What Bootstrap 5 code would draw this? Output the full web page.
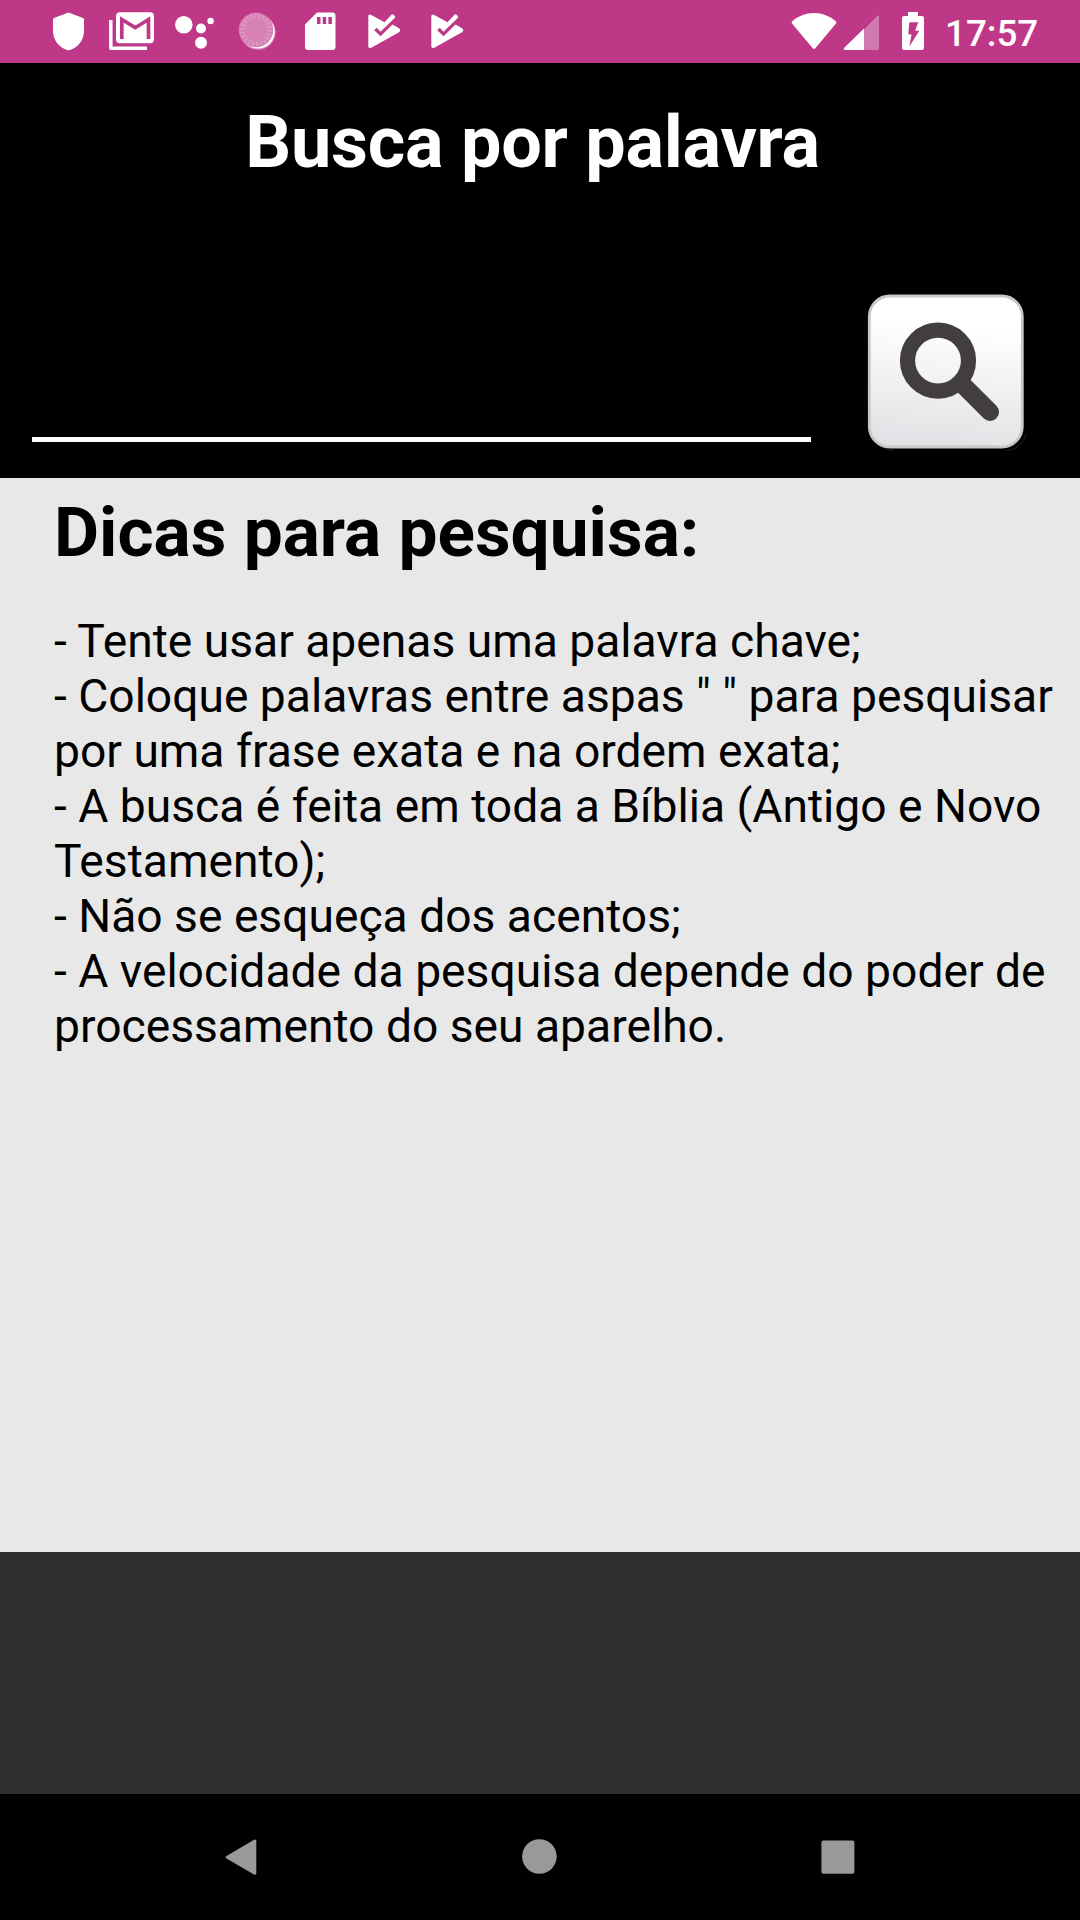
<!DOCTYPE html>
<html lang="pt-BR">
<head>
<meta charset="utf-8">
<meta name="viewport" content="width=device-width, initial-scale=1">
<title>Busca por palavra</title>
<link href="https://cdn.jsdelivr.net/npm/bootstrap@5.3.0/dist/css/bootstrap.min.css" rel="stylesheet">
<style>
body{font-family:Roboto,"Noto Sans",sans-serif;background:#303030;color:#000;height:1920px;overflow:hidden}
svg{display:block;flex:none}
.status{height:63px;background:#be3887;color:#fff;padding-left:37px}
.clock{font-size:36.75px;font-weight:500;line-height:43px;width:135px;padding-top:3px}
.search-head{height:415px;background:#000;color:#fff;padding-top:37px}
.screen-title{font-size:72px;letter-spacing:-.25px;line-height:86px;font-weight:700;padding-right:15px}
.search-row{padding-left:32px;padding-right:52px;height:292px}
.word-input,.word-input:focus{width:779px;height:94px;margin-bottom:36px;border:0;border-bottom:5px solid #fff;border-radius:0;background:transparent;color:#fff;box-shadow:none}
.search-btn{margin-bottom:24px}
.tips{height:1074px;background:#e8e8e8;padding:15px 10px 0 54px}
.tips h2{font-size:69.4px;line-height:80px;font-weight:700}
.tips p{font-size:46.2px;line-height:55px;margin-top:41px;white-space:nowrap}
.nav-keys{height:126px;background:#000}
</style>
</head>
<body class="d-flex flex-column">
<header class="status d-flex align-items-center">
  <svg width="63" height="63" viewBox="37 0 63 63"><path fill="#fff" d="M68.500 12.500 83 18q1 .4 1 1.500V31c0 9-6 17-15.500 19.500C59 48 53 40 53 31V19.500q0-1 1-1.500Z"/></svg>
  <svg width="63" height="63" viewBox="100 0 63 63"><path fill="none" stroke="#fff" stroke-width="3.500" stroke-linejoin="round" d="M110.800 20v28.300H147"/><rect x="116" y="12.300" width="38" height="31" rx="4" fill="#fff"/><path fill="none" stroke="#be3887" stroke-width="3.700" d="M121.800 39V19.500l13.400 8.200 13.300-8.200V39"/></svg>
  <svg width="63" height="63" viewBox="163 0 63 63" fill="#fff"><circle cx="183.800" cy="24.800" r="8.800"/><circle cx="201" cy="28.500" r="5"/><circle cx="210.600" cy="21" r="3.200"/><circle cx="201" cy="42.700" r="6"/></svg>
  <svg width="63" height="63" viewBox="226 0 63 63"><circle cx="258" cy="32.200" r="17.600" fill="#d98bb9"/><circle cx="257.900" cy="31.600" r="16.900" fill="#fff"/><circle cx="256" cy="29.900" r="17.300" fill="#d781b4"/><circle cx="256" cy="29.900" r="13.700" fill="none" stroke="#dd97c0" stroke-width="4.600" stroke-dasharray="1.800 2.110"/></svg>
  <svg width="63" height="63" viewBox="289 0 63 63"><path fill="#fff" fill-rule="evenodd" d="M317 12.500h15.500q3 0 3 3V47q0 3-3 3H308q-3 0-3-3V24.500ZM317 17v7h3.500v-7Zm5.700 0v7h3.500v-7Zm5.700 0v7h3.500v-7Z"/></svg>
  <svg width="63" height="63" viewBox="352 0 63 63"><path id="play-check" fill="#fff" d="M368.300 16.500q0-3 3-1.500L384.500 22.300 391 15.200q1.500-1.500 2.500-.5l1.200 1.200q1 1 0 2.200L380.500 31.700l-3.800-4-2.500 2.600 6.400 6L392.500 24.500 399 28.300q2.500 2 0 4L371.300 47.700q-3 1-3-1.500Z"/></svg>
  <svg width="63" height="63" viewBox="352 0 63 63"><use href="#play-check"/></svg>
  <div class="d-flex align-items-center ms-auto">
    <svg width="52" height="63" viewBox="788 0 52 63"><path fill="#fff" d="M792 21.500C798 16 806 13 814 13s16 3 22 8.500q.8 1 0 2L815.500 48q-1.500 1.800-3 0L792 23.500q-.8-1 0-2Z"/></svg>
    <svg width="50" height="63" viewBox="840 0 50 63"><path fill="#d27aaf" d="M864 29.500 877 16q2-2 2 1v31q0 2-2 2h-13Z"/><path fill="#fff" d="M864 28.500V50h-18.500q-3 0-1-2.500Z"/></svg>
    <svg width="55" height="63" viewBox="890 0 55 63"><path fill="#fff" d="M908 12h10v4h4q2 0 2 2v30q0 2-2 2h-18q-2 0-2-2V18q0-2 2-2h4Z"/><path fill="#be3887" d="M909.300 22.300h9l-3.200 8.400h4.200L909.300 46.500l2.300-12h-3.300Z"/></svg>
    <div class="clock">17:57</div>
  </div>
</header>
<section class="search-head">
  <h1 class="screen-title text-center mb-0">Busca por palavra</h1>
  <form class="search-row d-flex align-items-end justify-content-between" onsubmit="return false">
    <input class="word-input form-control p-0" type="text" aria-label="Palavra">
    <button class="search-btn btn p-0 border-0" type="submit" aria-label="Buscar">
      <svg width="164" height="164" viewBox="864 290 164 164">
        <defs><linearGradient id="face" x1=".1" y1="0" x2="0" y2="1"><stop offset=".15" stop-color="#fff"/><stop offset="1" stop-color="#dfe0e3"/></linearGradient></defs>
        <path fill="none" stroke="#222" stroke-width="1" d="M1007 451q16-3 19-17M894 451q-11-2-17-8"/>
        <rect x="869.300" y="296" width="153" height="151" rx="20.500" fill="url(#face)" stroke="#c9c7c8" stroke-width="2.800"/>
        <circle cx="938" cy="360.600" r="30.500" fill="none" stroke="#433e3e" stroke-width="15.200"/>
        <path stroke="#433e3e" stroke-width="18" stroke-linecap="round" d="m963 385 27 27"/>
      </svg>
    </button>
  </form>
</section>
<main class="tips">
  <h2 class="mb-0">Dicas para pesquisa:</h2>
  <p class="mb-0">- Tente usar apenas uma palavra chave;<br>- Coloque palavras entre aspas " " para pesquisar<br>por uma frase exata e na ordem exata;<br>- A busca é feita em toda a Bíblia (Antigo e Novo<br>Testamento);<br>- Não se esqueça dos acentos;<br>- A velocidade da pesquisa depende do poder de<br>processamento do seu aparelho.</p>
</main>
<footer class="nav-keys d-flex align-items-center justify-content-center mt-auto">
  <svg width="298" height="126" viewBox="93 1794 298 126"><path fill="#999" stroke="#999" stroke-width="3" stroke-linejoin="round" d="M227.200 1857.200 254.800 1841v32.300Z"/></svg>
  <svg width="298" height="126" viewBox="391 1794 298 126"><circle cx="539.400" cy="1856.500" r="17.300" fill="#999"/></svg>
  <svg width="298" height="126" viewBox="689 1794 298 126"><rect x="821.400" y="1840.400" width="33" height="33.300" rx="2" fill="#999"/></svg>
</footer>
<script src="https://cdn.jsdelivr.net/npm/bootstrap@5.3.0/dist/js/bootstrap.bundle.min.js"></script>
</body>
</html>
